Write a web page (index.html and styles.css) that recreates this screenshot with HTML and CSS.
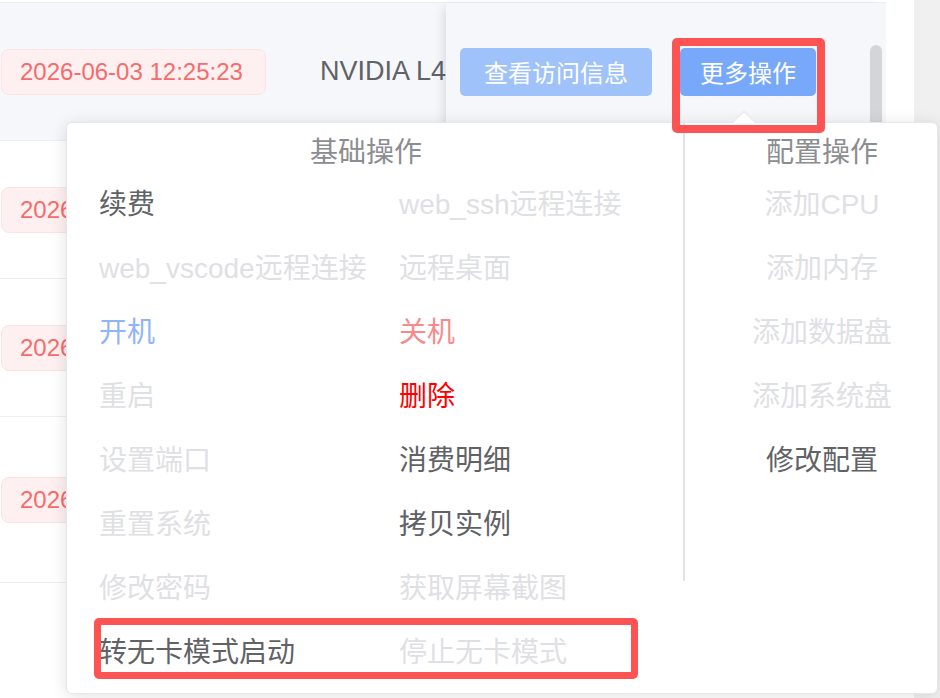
FILE: index.html
```html
<!DOCTYPE html>
<html lang="zh-CN">
<head>
<meta charset="utf-8">
<title>更多操作</title>
<link rel="stylesheet" href="styles.css">
</head>
<body>
<div class="page">
  <div class="table">
    <div class="edge"></div>
    <div class="row row-hover">
      <div class="cell cell-time"><span class="tag">2026-06-03 12:25:23</span></div>
      <div class="cell cell-gpu">NVIDIA L4</div>
      <div class="cell cell-actions">
        <button class="btn btn-light">查看访问信息</button>
        <button class="btn btn-main">更多操作</button>
      </div>
    </div>
    <div class="row">
      <div class="cell cell-time"><span class="tag">2026-06-03 12:25:23</span></div>
      <div class="cell cell-gpu">NVIDIA L4</div>
      <div class="cell cell-actions"></div>
    </div>
    <div class="row">
      <div class="cell cell-time"><span class="tag">2026-06-03 12:25:23</span></div>
      <div class="cell cell-gpu">NVIDIA L4</div>
      <div class="cell cell-actions"></div>
    </div>
    <div class="row row-tall">
      <div class="cell cell-time"><span class="tag">2026-06-03 12:25:23</span></div>
      <div class="cell cell-gpu">NVIDIA L4</div>
      <div class="cell cell-actions"></div>
    </div>
    <div class="thumb"></div>
  </div>
  <div class="blank"></div>
  <div class="gutter"></div>

  <div class="popover">
    <div class="arrow"></div>
    <div class="pop-left">
      <div class="pop-title title-left">基础操作</div>
      <div class="grid">
        <div class="item dark">续费</div>
        <div class="item dis">web_ssh远程连接</div>
        <div class="item dis">web_vscode远程连接</div>
        <div class="item dis">远程桌面</div>
        <div class="item blue">开机</div>
        <div class="item pink">关机</div>
        <div class="item dis">重启</div>
        <div class="item red">删除</div>
        <div class="item dis">设置端口</div>
        <div class="item dark">消费明细</div>
        <div class="item dis">重置系统</div>
        <div class="item dark">拷贝实例</div>
        <div class="item dis">修改密码</div>
        <div class="item dis">获取屏幕截图</div>
        <div class="item dark">转无卡模式启动</div>
        <div class="item dis">停止无卡模式</div>
      </div>
    </div>
    <div class="divider"></div>
    <div class="pop-right">
      <div class="pop-title">配置操作</div>
      <div class="list">
        <div class="item dis">添加CPU</div>
        <div class="item dis">添加内存</div>
        <div class="item dis">添加数据盘</div>
        <div class="item dis">添加系统盘</div>
        <div class="item dark">修改配置</div>
      </div>
    </div>
  </div>

  <div class="mark mark-more"></div>
  <div class="mark mark-nocard"></div>
</div>
</body>
</html>
```

FILE: styles.css
```css
* { box-sizing: border-box; }

html, body {
  margin: 0;
  padding: 0;
  background: #ffffff;
}

body {
  font-family: "Liberation Sans", "Noto Sans CJK SC", sans-serif;
  color: #606266;
}

.page {
  position: relative;
  width: 940px;
  height: 698px;
  display: flex;
  overflow: hidden;
}

.table {
  position: relative;
  width: 886px;
  flex: none;
}

.edge {
  height: 3px;
  border-bottom: 1px solid #ebeef5;
}

.row {
  display: flex;
  height: 138px;
  border-bottom: 1px solid #ebeef5;
  background: #ffffff;
}

.row-hover {
  background: #f5f7fa;
}

.row-tall {
  height: 166px;
}

.cell {
  display: flex;
  align-items: center;
}

.cell-time {
  width: 320px;
  flex: none;
  padding-left: 1px;
}

.tag {
  display: inline-flex;
  align-items: center;
  height: 46px;
  padding: 0 22px 0 18px;
  border: 1px solid #fde2e2;
  border-radius: 8px;
  background: #fef0f0;
  color: #f56c6c;
  font-size: 24px;
  white-space: nowrap;
}

.cell-gpu {
  flex: 1;
  min-width: 0;
  overflow: hidden;
  white-space: nowrap;
  font-size: 27px;
  color: #606266;
}

.cell-actions {
  width: 440px;
  flex: none;
  padding-left: 14px;
  gap: 28px;
  background: inherit;
  box-shadow: -6px 0 10px -4px rgba(0, 0, 0, 0.12);
}

.btn {
  height: 48px;
  border: none;
  border-radius: 5px;
  color: #ffffff;
  font-family: "Liberation Sans", "Noto Sans CJK SC", sans-serif;
  font-size: 24px;
  padding: 0;
}

.btn-light {
  width: 192px;
  background: #a0c2fb;
}

.btn-main {
  width: 136px;
  background: #78a8f9;
}

.thumb {
  position: absolute;
  left: 870px;
  top: 45px;
  width: 12px;
  height: 120px;
  border-radius: 6px;
  background: #d4d5d8;
}

.blank {
  width: 28px;
  flex: none;
  background: #ffffff;
}

.gutter {
  flex: 1;
  background: #f0f0f0;
}

/* popover */
.popover {
  position: absolute;
  left: 66px;
  top: 122px;
  width: 872px;
  height: 572px;
  display: flex;
  background: #ffffff;
  border: 1px solid #e4e7ed;
  border-radius: 6px;
  box-shadow: 0 2px 16px rgba(0, 0, 0, 0.12);
}

.arrow {
  position: absolute;
  left: 669px;
  top: -9px;
  width: 16px;
  height: 16px;
  background: #ffffff;
  border-top: 1px solid #e4e7ed;
  border-left: 1px solid #e4e7ed;
  transform: rotate(45deg);
}

.pop-left {
  width: 616px;
  flex: none;
  padding-left: 32px;
}

.pop-title {
  height: 40px;
  margin-top: 10px;
  line-height: 40px;
  font-size: 28px;
  color: #8c8d90;
  text-align: center;
}

.title-left {
  padding-right: 50px;
}

.grid {
  display: grid;
  grid-template-columns: 300px 300px;
  grid-auto-rows: 64px;
  align-items: center;
}

.item {
  font-size: 28px;
  line-height: 64px;
  white-space: nowrap;
}

.divider {
  width: 2px;
  height: 458px;
  flex: none;
  background: #e2e4ea;
}

.pop-right {
  flex: 1;
  padding-left: 22px;
  text-align: center;
}

.list {
  display: flex;
  flex-direction: column;
}

.dark { color: #606266; }
.dis { color: #dfe0e4; }
.blue { color: #8fb4f7; }
.pink { color: #f78b8b; }
.red { color: #ff0000; }

/* annotation frames */
.mark {
  position: absolute;
  border: 8px solid #fd5353;
  border-radius: 5px;
}

.mark-more {
  left: 672px;
  top: 38px;
  width: 153px;
  height: 95px;
}

.mark-nocard {
  left: 94px;
  top: 618px;
  width: 544px;
  height: 61px;
  border-width: 7px;
}
```
